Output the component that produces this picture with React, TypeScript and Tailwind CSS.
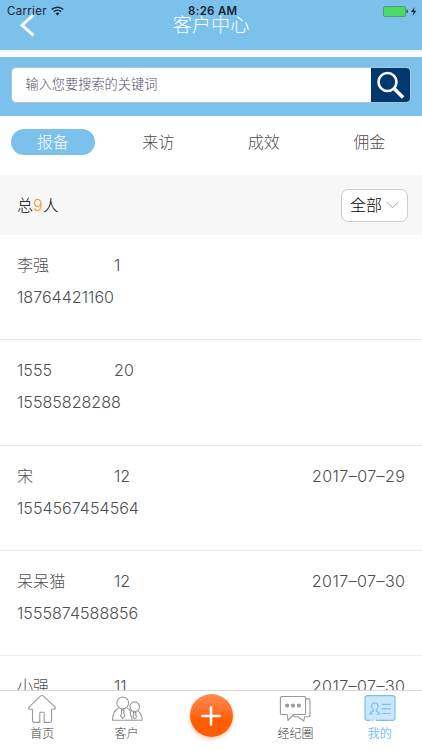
import { useState } from 'react'
import type { ReactNode } from 'react'
import clsx from 'clsx'

interface Client { name: string; count: string; phone: string; date?: string }

const TABS = ['报备', '来访', '成效', '佣金']

const CLIENTS: Client[] = [
  { name: '李强', count: '1', phone: '18764421160' },
  { name: '1555', count: '20', phone: '15585828288' },
  { name: '宋', count: '12', phone: '1554567454564', date: '2017–07–29' },
  { name: '呆呆猫', count: '12', phone: '1555874588856', date: '2017–07–30' },
  { name: '小强', count: '11', phone: '', date: '2017–07–30' },
]

function StatusBar() {
  return (
    <div className="absolute inset-x-0 top-0 flex h-[22px] items-center text-[11.5px] text-[#16242e]">
      <span className="ml-[7px] w-[39px] pt-[2px] font-normal tracking-[0.3px]">Carrier</span>
      <svg className="ml-[5px] h-[10px] w-[13px]" viewBox="0 0 13 10" fill="none" stroke="currentColor">
        <path d="M.8 3.5a8.2 8.2 0 0 1 11.4 0" strokeWidth="1.6" />
        <path d="M2.9 5.7a5.2 5.2 0 0 1 7.2 0" strokeWidth="1.5" />
        <path d="M6.5 9.6 4.5 7.5a2.9 2.9 0 0 1 4 0z" fill="currentColor" stroke="none" />
      </svg>
      <span className="absolute left-[188px] pt-[2px] text-[11.5px] font-semibold tracking-[0.3px]">8:26 AM</span>
      <svg className="ml-auto mr-[5px] h-[11px] w-[34px]" viewBox="0 0 34 11">
        <rect x=".5" y=".5" width="22" height="10" rx="1.5" fill="#4cd964" stroke="#4b9272" strokeWidth=".8" />
        <path d="M23.6 3.6c1.6.3 1.6 3.5 0 3.8z" fill="#16242e" />
        <path d="M31.6 1 28 6h2.5l-1 4 4-5.2h-2.6z" fill="#16242e" />
      </svg>
    </div>
  )
}

function HomeIcon() {
  return (
    <svg className="h-[30px] w-[32px]" viewBox="0 0 32 30" fill="none" stroke="currentColor" strokeWidth="1.100" strokeLinejoin="round">
      <path d="M16 1.500c-.8 0-1.300.400-1.900.900L3 13.200c-.9 1 .1 2.100 1.300 2.100h2.200v10.900c0 1.500.7 2.200 2.100 2.200h5.200v-9.200c0-.6.3-.9.9-.9h2.600c.6 0 .9.300.9.900v9.200h5.200c1.400 0 2.100-.7 2.100-2.200V15.300h2.200c1.200 0 2.200-1.100 1.300-2.100L17.900 2.400c-.6-.5-1.100-.9-1.900-.9z" />
    </svg>
  )
}

function ClientsIcon() {
  return (
    <svg className="h-[30px] w-[32px]" viewBox="0 0 32 30" fill="none" stroke="currentColor" strokeWidth="1.100" strokeLinejoin="round">
      <circle cx="11.700" cy="8.900" r="5.900" />
      <circle cx="23.700" cy="12.700" r="4.800" />
      <path d="M7.500 13.900c-3.600 2-6 6.500-6 12.300h29.700c0-4.200-1.500-7-4.200-9.300" />
      <path d="M16 13.900c1.600 1 2.700 2 3.500 3.400" />
      <path d="M20.300 17c-.8.700-1.200 1.700-1 2.700.8 1.700 1.400 4 1.900 6.500" />
      <path d="m10.500 15.600 1.200.6 1.200-.6.300 1.400-.6 1 1.200 4-2.100 2.400L9.600 22l1.200-4-.6-1z" />
      <path d="m22.500 18 1.200.6 1.200-.6.200 1.200-.5.800.9 3-1.800 2-1.800-2 .9-3-.5-.8z" />
    </svg>
  )
}

function CircleChatIcon() {
  return (
    <svg className="h-[30px] w-[32px]" viewBox="0 0 32 30" fill="none" stroke="currentColor" strokeWidth="1.100" strokeLinejoin="round">
      <path d="M2.700 2.500h22.600c.8 0 1.300.5 1.300 1.300v15.400c0 .8-.5 1.300-1.300 1.300H14.700L9 26.400l-.8-5.900H2.700c-.8 0-1.300-.5-1.300-1.300V3.800c0-.8.5-1.300 1.300-1.300z" />
      <path d="M26.600 4.900h3.300c.7 0 1.100.5 1.100 1.300v15.200c0 .8-.4 1.300-1.100 1.300h-4.300l-.8 4.300-5.900-4.300h-3.200l-1.600-1.300" />
      <circle cx="8.200" cy="11.600" r="1.500" fill="currentColor" />
      <circle cx="14" cy="11.600" r="1.500" fill="currentColor" />
      <circle cx="19.900" cy="11.600" r="1.500" fill="currentColor" />
    </svg>
  )
}

function ProfileIcon() {
  return (
    <svg className="h-[30px] w-[32px]" viewBox="0 0 32 30" fill="none" stroke="#7bc0ed" strokeWidth="1.200" strokeLinejoin="round">
      <path d="M3.500 1.600h25c1.600 0 2.500.9 2.500 2.500v19.700c0 1.600-.9 2.500-2.500 2.500H3.500C1.900 26.300 1 25.400 1 23.800V4.100c0-1.600.9-2.500 2.500-2.500z" fill="#cbe6f9" />
      <path d="M6.600 26.300 8 28.200l3.600-2.300" stroke="#fff" strokeWidth="1.600" />
      <path d="M9.300 15.700C8.300 15 7.600 13.700 7.600 12.300 7.600 10.300 8.800 9 10.800 9s3.200 1.300 3.200 3.300c0 1.400-.7 2.700-1.700 3.400v1.400c1.400.5 3.100 1 3.400 2.900h-3M9.300 15.700v1.400c-1.400.5-3.100 1-3.400 2.900h3" />
      <path d="M17.800 10.300h9M17.800 14.900h9M17.800 19.500h9" />
    </svg>
  )
}

function NavItem({ icon, label, active }: { icon: ReactNode; label: string; active?: boolean }) {
  return (
    <button className={clsx('flex flex-1 flex-col items-center pt-[3px]', active ? 'text-[#7bc0ed]' : 'text-[#999]')}>
      {icon}
      <span className={clsx('text-[12px] leading-[20px]', active ? 'font-normal' : 'text-[#3d3d3d]')}>{label}</span>
    </button>
  )
}

function ClientRow({ client }: { client: Client }) {
  return (
    <li className="h-[105.300px] border-b border-[#ebebeb] px-[17px] pt-[17px] text-[16.100px] leading-[26px] text-[#4f4f4f]">
      <div className="flex">
        <span className="w-[97px]">{client.name}</span>
        <span className="flex-1">{client.count}</span>
        {client.date && <span className="-mr-[0.4px] tracking-[0.4px]">{client.date}</span>}
      </div>
      {client.phone && <p className="mt-[6px]">{client.phone}</p>}
    </li>
  )
}

export default function App() {
  const [tab, setTab] = useState('报备')

  return (
    <div className="flex h-[750px] w-[422px] flex-col overflow-hidden bg-white font-['Inter','Noto_Sans_CJK_SC',sans-serif] font-light">
      <header className="relative h-[50px] shrink-0 bg-[#7bc1ec]">
        <h1 className="pt-[10px] text-center text-[19.200px] leading-[30px] text-white">客户中心</h1>
        <svg className="absolute left-[19px] top-[13px] h-[24px] w-[17px]" viewBox="0 0 17 24" fill="none" stroke="#fff" strokeWidth="2.900">
          <path d="M14.500 2 3 12.200l11.500 10.200" />
        </svg>
        <StatusBar />
      </header>

      <div className="shrink-0 border-t-[7px] border-[#f8fbfe] bg-[#7bc1ec] px-[11px] pt-[10px] pb-[13px]">
        <div className="flex h-[36px] overflow-hidden rounded-[5px] border border-[#a5c5da] bg-white">
          <input
            placeholder="输入您要搜索的关键词"
            className="min-w-0 flex-1 px-[13.500px] text-[13.200px] text-[#4b4b68] outline-none placeholder:text-[#4b4b68]"
          />
          <button className="-my-px -mr-px flex w-[40px] items-center justify-center bg-[#00376d]">
            <svg className="h-[30px] w-[30px]" viewBox="0 0 30 30" fill="none" stroke="#f4f8fc">
              <circle cx="11.500" cy="12" r="9" strokeWidth="2.700" />
              <path d="m18.300 18.700 8.800 8.800" strokeWidth="3.600" />
            </svg>
          </button>
        </div>
      </div>

      <nav className="flex h-[59px] shrink-0 items-start pt-[13px]">
        {TABS.map(t => (
          <div key={t} className="flex flex-1 justify-center">
            <button
              onClick={() => setTab(t)}
              className={clsx('h-[26px] w-[84px] rounded-full text-[16px] leading-[26px]', tab === t ? 'bg-[#7bc1ec] text-white' : 'text-[#4a4a4a]')}
            >
              {t}
            </button>
          </div>
        ))}
      </nav>

      <div className="flex h-[60px] shrink-0 items-center justify-between bg-[#f7f7f7] pl-[17px] pr-[14px]">
        <p className="text-[16px] text-black">总<span className="text-[#f2962e]">9</span>人</p>
        <button className="flex h-[33px] w-[67px] items-center justify-center gap-[4px] rounded-[7px] border border-[#ccc] bg-white text-[16px] text-black">
          全部
          <svg className="h-[8px] w-[13px]" viewBox="0 0 13 8" fill="none" stroke="#aaa">
            <path d="m.5.800 6 6 6-6" />
          </svg>
        </button>
      </div>

      <ul className="min-h-0 flex-1 overflow-hidden">
        {CLIENTS.map((c, i) => <ClientRow key={i} client={c} />)}
      </ul>

      <footer className="flex h-[60px] shrink-0 border-t border-[#d9d9d9] bg-white">
        <NavItem icon={<HomeIcon />} label="首页" />
        <NavItem icon={<ClientsIcon />} label="客户" />
        <div className="flex flex-1 justify-center pt-[3px]">
          <button className="flex size-[43px] items-center justify-center rounded-full bg-linear-to-b from-[#ff8c4d] to-[#ff5d00] to-60% shadow-[0_2px_4px_rgba(255,110,30,0.35)]">
            <svg className="size-[20px]" viewBox="0 0 20 20" stroke="#fff" strokeWidth="2.600" strokeLinecap="round">
              <path d="M10 1.500v17M1.500 10h17" />
            </svg>
          </button>
        </div>
        <NavItem icon={<CircleChatIcon />} label="经纪圈" />
        <NavItem icon={<ProfileIcon />} label="我的" active />
      </footer>
    </div>
  )
}
